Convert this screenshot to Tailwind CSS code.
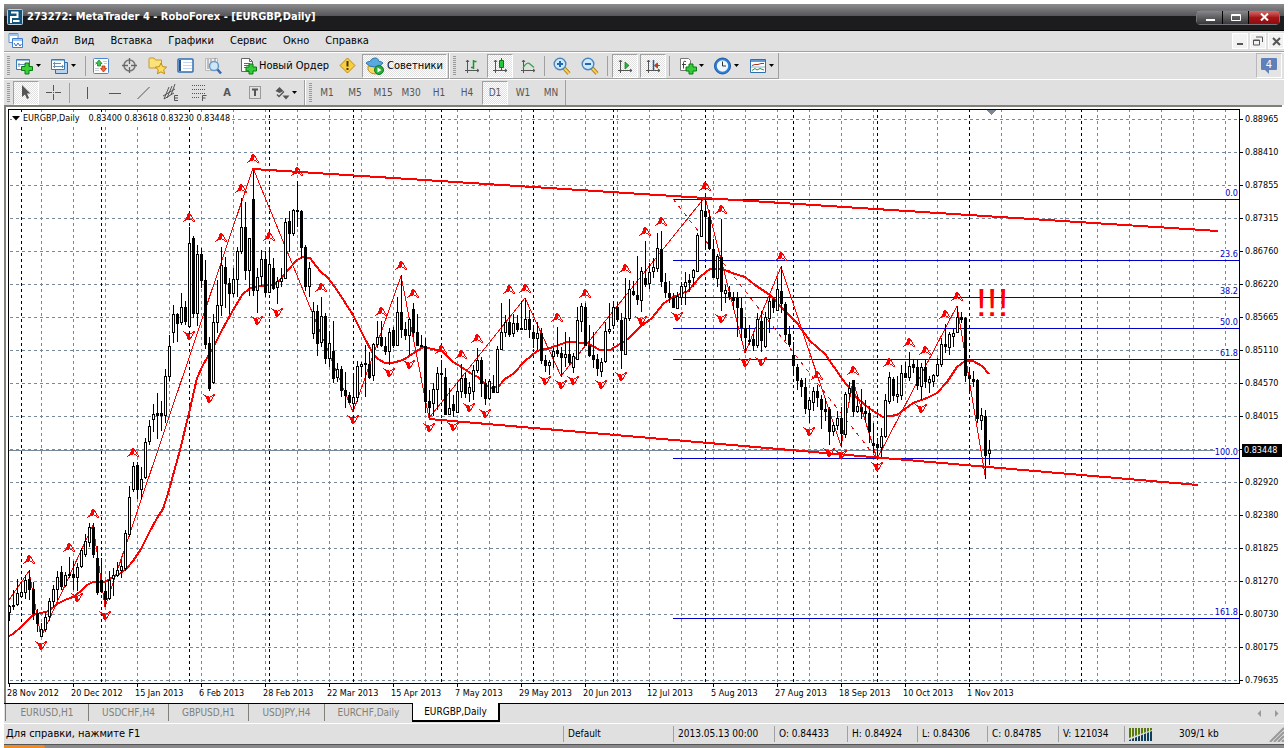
<!DOCTYPE html>
<html lang="ru">

<head>
    <meta charset="UTF-8">
    <meta name="viewport" content="width=device-width, initial-scale=1.0">
    <title>273272: MetaTrader 4 - RoboForex - [EURGBP,Daily]</title>
    <script src="https://cdn.jsdelivr.net/npm/@tailwindcss/browser@4"></script>
</head>

<body class="bg-white h-screen overflow-hidden px-1 pt-1 flex flex-col font-['DejaVu_Sans_Condensed','DejaVu_Sans',sans-serif] text-[11px] leading-4 text-black">

    <!-- title bar -->
    <header class="h-[27px] shrink-0 flex items-center pl-[3px] pr-1 bg-linear-to-b from-[#8c8c8f] from-0% via-[#57575a] via-45% to-[#1c1c1e] to-46% border-b border-black">
        <svg class="w-4 h-4" viewBox="0 0 16 16">
            <rect x="0.5" y="0.5" width="15" height="15" rx="1" fill="#12547e" stroke="#b9d3e2" />
            <path d="M4 14V8h6.500V3.500H4M6 12h6.500" fill="none" stroke="#fff" stroke-width="2" />
        </svg>
        <h1 class="pl-1 text-white font-bold text-[11px]">273272: MetaTrader 4 - RoboForex - [EURGBP,Daily]</h1>
        <div class="ml-auto flex rounded-sm border border-[#77777b] bg-black gap-px">
            <button aria-label="Minimize" class="w-[25px] h-[13px] flex items-center justify-center bg-linear-to-b from-[#88888b] to-[#38383b]"><svg width="10" height="9"><path d="M1 7h9" stroke="#fff" stroke-width="2" /></svg></button>
            <button aria-label="Maximize" class="w-[25px] h-[13px] flex items-center justify-center bg-linear-to-b from-[#88888b] to-[#38383b]"><svg width="10" height="8"><path d="M.5 1.500h9v6h-9zM1 2.500h8" fill="none" stroke="#fff" /></svg></button>
            <button aria-label="Close" class="w-[30px] h-[13px] flex items-center justify-center bg-linear-to-b from-[#d86a6a] via-[#a81418] to-[#8e0d10]"><svg width="9" height="8"><path d="M1 0.5l7 7M8 0.5l-7 7" stroke="#fff" stroke-width="2" /></svg></button>
        </div>
    </header>

    <!-- menu -->
    <nav class="h-[21px] shrink-0 flex items-center bg-[#e0e0e0] border-b border-[#a0a0a0] pl-1">
        <svg class="w-4 h-4 mr-[7px]" viewBox="0 0 16 16">
            <path d="M1 .5h9v9h-9z" fill="#fff" stroke="#5b93d8" />
            <path d="M1 1h9v2h-9z" fill="#9cc4f2" />
            <path d="M4.500 5.500h10v9h-10z" fill="#fff" stroke="#3f7ecb" />
            <path d="M5 6h9v2h-9z" fill="#9cc4f2" />
            <path d="M6 10l2 3 2-3 2 3 1.500-2" fill="none" stroke="#2f6fd0" />
        </svg>
        <div class="flex gap-4">
            <a href="#">Файл</a>
            <a href="#">Вид</a>
            <a href="#">Вставка</a>
            <a href="#">Графики</a>
            <a href="#">Сервис</a>
            <a href="#">Окно</a>
            <a href="#">Справка</a>
        </div>
        <div class="ml-auto flex gap-[2px]">
            <button aria-label="Minimize chart" class="w-4 h-4 bg-[#f2f2f2] border border-white flex items-center justify-center"><svg width="8" height="8"><path d="M1 7h6" stroke="#555" stroke-width="2" /></svg></button>
            <button aria-label="Restore chart" class="w-4 h-4 bg-[#f2f2f2] border border-white flex items-center justify-center"><svg width="10" height="10"><path d="M3 1h6.500v5M.5 4h6v5h-6zM1 4.500h6" fill="none" stroke="#555" /></svg></button>
            <button aria-label="Close chart" class="w-4 h-4 bg-[#f2f2f2] border border-white flex items-center justify-center"><svg width="9" height="9"><path d="M1 1l7 7M8 1l-7 7" stroke="#555" stroke-width="2" /></svg></button>
        </div>
    </nav>

    <!-- main toolbar -->
    <div class="h-[27px] shrink-0 flex bg-[#e0e0e0] border-t border-white">
        <div class="flex items-center h-[26px] border-b border-r border-[#a0a0a0] pl-[3px] pr-px">
            <i class="w-[3px] h-5 mr-1 bg-[repeating-linear-gradient(#999_0_1px,#e0e0e0_1px_2px)]"></i>
            <button aria-label="New chart" class="w-[35px] h-6 flex items-center pl-px">
                <svg width="19" height="18"><path d="M1.500 2.500h13v10h-13z" fill="#fff" stroke="#3a78b8" /><path d="M2 3h12v1h-12z" fill="#8dbbe8" /><path d="M4 6v4M3 7.500h7" stroke="#6a8db0" /><path d="M10 17v-3.500h-3.500v-4h3.500v-3.500h4v3.500h3.500v4h-3.500v3.500z" fill="#3ad13a" stroke="#0a7a12" /></svg>
                <svg class="ml-[2px]" width="5" height="3"><path d="M0 0h5l-2.500 3z" /></svg>
            </button>
            <button aria-label="Profiles" class="w-[36px] h-6 flex items-center pl-px">
                <svg width="19" height="18"><path d="M5.500 5.500h12v11h-12z" fill="#b6d3f0" stroke="#2f6cae" /><path d="M1.500 2.500h13v10h-13z" fill="#fff" stroke="#3a78b8" /><path d="M2 3h12v1h-12z" fill="#8dbbe8" /><path d="M4.500 5v6M3 6.500h8M12 8l1.500 1.500-1.500 1.500M3 9.500h10" fill="none" stroke="#6a8db0" /></svg>
                <svg class="ml-[2px]" width="5" height="3"><path d="M0 0h5l-2.500 3z" /></svg>
            </button>
            <i class="w-px h-5 mr-px bg-[#a0a0a0]"></i>
            <button aria-label="Market watch" class="w-7 h-6 flex items-center justify-center">
                <svg width="16" height="16"><rect x=".5" y=".5" width="15" height="15" rx="1" fill="#fff" stroke="#4b86cf" /><path d="M2 4.500h2M2 6.500h1M10 3.500h4M11 5.500h3M2 10.500h4M2 12.500h4" stroke="#c4ccd6" /><path d="M6 2l3 3.500h-1.500v2.500h-3v-2.500h-1.500z" fill="#3fc44c" stroke="#158a25" stroke-width=".8" /><path d="M10.500 14l3-3.500h-1.500v-2.500h-3v2.500h-1.500z" fill="#f06a3c" stroke="#b5330e" stroke-width=".8" /></svg>
            </button>
            <button aria-label="Data window" class="w-7 h-6 flex items-center justify-center">
                <svg width="17" height="17"><circle cx="8.500" cy="8.500" r="5.500" fill="none" stroke="#777" stroke-width="1.500" /><path d="M8.500 1v6M8.500 10v6M1 8.500h6M10 8.500h6" stroke="#666" stroke-width="1.300" /></svg>
            </button>
            <button aria-label="Navigator" class="w-7 h-6 flex items-center justify-center">
                <svg width="19" height="18"><path d="M1 2q0-1 1-1h4l1.500 2h6v8h-12.500z" fill="#fbe27a" stroke="#c79a25" /><path d="M13 6l1.700 3.700 4 .4-3 2.700.9 4-3.600-2-3.600 2 .9-4-3-2.700 4-.4z" fill="#ffdf5e" stroke="#c48a16" /></svg>
            </button>
            <button aria-label="Terminal" class="w-7 h-6 flex items-center justify-center">
                <svg width="17" height="15"><rect x="1" y="1" width="15" height="13" rx="1" fill="#fff" stroke="#2f6db4" stroke-width="1.500" /><path d="M2 2h2v11h-2z" fill="#2a4f86" /><path d="M6 4.500h9M6 7.500h9M6 10.500h9" stroke="#c3d7ee" /></svg>
            </button>
            <button aria-label="Strategy tester" class="w-7 h-6 flex items-center justify-center">
                <svg width="18" height="18"><path d="M1.500 1.500h12v12h-12z" fill="#f2f2f2" stroke="#bbb" /><path d="M4 2v10M7 2v6M11 1v5" stroke="#888" /><circle cx="10" cy="9" r="4.500" fill="#c8e6fb" fill-opacity=".85" stroke="#6b9cc5" stroke-width="1.500" /><path d="M13.500 12.500l3.500 4" stroke="#3a66b5" stroke-width="2.500" /></svg>
            </button>
            <button class="h-6 ml-2 flex items-center gap-[2px] px-1">
                <svg width="18" height="18"><path d="M2.500 1.500h8l3 3v10h-11z" fill="#fff" stroke="#666" /><path d="M10.500 1.500v3h3M5 6.500h6M5 8.500h6M5 10.500h3" fill="none" stroke="#666" /><path d="M10 17v-3h-3v-4h3v-3h4v3h3.500v4h-3.500v3z" fill="#35cc3b" stroke="#0a7a12" /></svg>
                Новый Ордер
            </button>
            <button aria-label="Editor" class="w-7 h-6 flex items-center justify-center">
                <svg width="17" height="17"><path d="M8.500 1l7.500 7.500-7.500 7.500-7.500-7.500z" fill="#f8cf3f" stroke="#b98a14" /><path d="M8.500 4v5.500M8.500 11v2" stroke="#4a3500" stroke-width="2" /></svg>
            </button>
            <button class="h-6 ml-px px-[3px] flex items-center gap-[3px] border border-[#a0a0a0] border-b-white border-r-white bg-[repeating-conic-gradient(#fff_0_25%,#e0e0e0_0_50%)] bg-[length:2px_2px]">
                <svg width="18" height="18"><path d="M2 9v4q2 4 7 4t6-4v-4z" fill="#f6d860" stroke="#b8922a" /><path d="M0 6q3 4 8.500 4t8.500-4q-1-1.500-4-1.500q-1-4-4.500-3.500t-4.500 3.500q-3 0-4 1.500z" fill="#58a9e0" stroke="#2b76ad" /><circle cx="13" cy="13" r="4.500" fill="#28ad38" stroke="#127a22" /><path d="M11.500 10.500l4 2.500-4 2.500z" fill="#fff" /></svg>
                Советники
            </button>
        </div>
        <div class="flex items-center h-[26px] border-b border-r border-l border-[#a0a0a0] border-l-white pl-[3px] pr-1">
            <i class="w-[3px] h-5 mr-[2px] bg-[repeating-linear-gradient(#999_0_1px,#e0e0e0_1px_2px)]"></i>
            <button aria-label="Bar chart" class="w-7 h-6 flex items-center justify-center">
                <svg width="16" height="16"><path d="M3.500 2v13M1 12.500h14M2 4l1.500-2 1.500 2M13 11l2 1.500-2 1.500" fill="none" stroke="#555" /><path d="M9.500 2v9M9.500 3.500h3M7 9.500h3" stroke="#129b2a" stroke-width="1.500" /></svg>
            </button>
            <button aria-label="Candlesticks" class="w-[26px] h-6 mx-px flex items-center justify-center border border-[#a0a0a0] border-b-white border-r-white bg-[repeating-conic-gradient(#fff_0_25%,#e0e0e0_0_50%)] bg-[length:2px_2px]">
                <svg width="16" height="16"><path d="M3.500 2v13M1 12.500h14M2 4l1.500-2 1.500 2M13 11l2 1.500-2 1.500" fill="none" stroke="#555" /><path d="M9.500 0v12" stroke="#0a7a12" /><path d="M7.500 2.500h4v7h-4z" fill="#28c43a" stroke="#0a7a12" /></svg>
            </button>
            <button aria-label="Line chart" class="w-7 h-6 flex items-center justify-center">
                <svg width="16" height="16"><path d="M3.500 2v13M1 12.500h14M2 4l1.500-2 1.500 2M13 11l2 1.500-2 1.500" fill="none" stroke="#555" /><path d="M3 10q4-7 7-4l4 3.500" fill="none" stroke="#35a548" stroke-width="1.300" /></svg>
            </button>
            <i class="w-px h-5 ml-[2px] mr-[3px] bg-[#a0a0a0]"></i>
            <button aria-label="Zoom in" class="w-7 h-6 flex items-center justify-center">
                <svg width="18" height="18"><path d="M11 11l5 5.500" stroke="#a87910" stroke-width="4" /><path d="M11 11l5 5.500" stroke="#f5d254" stroke-width="2" /><circle cx="7" cy="7" r="5.800" fill="#cfe9fc" stroke="#4c86bb" stroke-width="1.400" /><path d="M4 7h6M7 4v6" stroke="#2568b0" stroke-width="2" /></svg>
            </button>
            <button aria-label="Zoom out" class="w-7 h-6 flex items-center justify-center">
                <svg width="18" height="18"><path d="M11 11l5 5.500" stroke="#a87910" stroke-width="4" /><path d="M11 11l5 5.500" stroke="#f5d254" stroke-width="2" /><circle cx="7" cy="7" r="5.800" fill="#cfe9fc" stroke="#4c86bb" stroke-width="1.400" /><path d="M4 7h6" stroke="#2568b0" stroke-width="2" /></svg>
            </button>
            <i class="w-px h-5 ml-[3px] mr-1 bg-[#a0a0a0]"></i>
            <button aria-label="Auto scroll" class="w-[26px] h-6 flex items-center justify-center border border-[#a0a0a0] border-b-white border-r-white bg-[repeating-conic-gradient(#fff_0_25%,#e0e0e0_0_50%)] bg-[length:2px_2px]">
                <svg width="16" height="16"><path d="M3.500 2v13M1 12.500h14M2 4l1.500-2 1.500 2M13 11l2 1.500-2 1.500" fill="none" stroke="#555" /><path d="M8 4l4 3.500-4 3.500z" fill="#28b43a" stroke="#0a7a12" stroke-width=".7" /></svg>
            </button>
            <button aria-label="Chart shift" class="w-[26px] h-6 ml-[2px] flex items-center justify-center border border-[#a0a0a0] border-b-white border-r-white bg-[repeating-conic-gradient(#fff_0_25%,#e0e0e0_0_50%)] bg-[length:2px_2px]">
                <svg width="16" height="16"><path d="M3.500 2v13M1 12.500h14M2 4l1.500-2 1.500 2M13 11l2 1.500-2 1.500" fill="none" stroke="#555" /><path d="M8.500 2v10" stroke="#235c9c" stroke-width="1.500" /><path d="M10 7.500h5M12.500 5l-3 2.500 3 2.500z" fill="#c43a12" stroke="#c43a12" /></svg>
            </button>
            <i class="w-px h-5 ml-[3px] mr-[9px] bg-[#a0a0a0]"></i>
            <button aria-label="Indicators" class="w-[35px] h-6 flex items-center">
                <svg width="18" height="18"><path d="M1.500 1.500h8l2 2v10h-10z" fill="#fff" stroke="#777" /><path d="M7 4.500q-2.500-1-2.500 1v6M3 7.500h4" fill="none" stroke="#444" /><path d="M10 17v-3h-3v-4h3v-3h4v3h3.500v4h-3.500v3z" fill="#35cc3b" stroke="#0a7a12" /></svg>
                <svg class="ml-[2px]" width="5" height="3"><path d="M0 0h5l-2.500 3z" /></svg>
            </button>
            <button aria-label="Periods" class="w-[35px] h-6 flex items-center">
                <svg width="18" height="18"><circle cx="8.500" cy="9" r="7" fill="#eef6fd" stroke="#2f7fd6" stroke-width="2.600" /><circle cx="8.500" cy="9" r="8" fill="none" stroke="#1c4f94" stroke-width=".8" /><path d="M8.500 4.500v4.500h3.500" fill="none" stroke="#333" /></svg>
                <svg class="ml-[2px]" width="5" height="3"><path d="M0 0h5l-2.500 3z" /></svg>
            </button>
            <button aria-label="Templates" class="h-6 flex items-center">
                <svg width="18" height="16"><path d="M1.500 1.500h15v13h-15z" fill="#fff" stroke="#2f6db4" /><path d="M2 2h14v2h-14z" fill="#5e9ade" /><path d="M3 7.500l3-1h3l3-1h3" fill="none" stroke="#b0331f" /><path d="M2 9h14" stroke="#8fb0d4" /><path d="M3 12.500l3-2 2 1.500 3-1.500 4 1.500" fill="none" stroke="#23913a" /></svg>
                <svg class="ml-[2px]" width="5" height="3"><path d="M0 0h5l-2.500 3z" /></svg>
            </button>
        </div>
        <button aria-label="Messages" class="ml-auto mr-[2px] w-[26px] h-[25px] flex items-center justify-center border border-[#b8b8b8] border-r-white border-b-white bg-[#e4e4e4]">
            <svg width="16" height="16"><path d="M1 0h14q1 0 1 1v10q0 1-1 1h-7v4l-4-4h-3q-1 0-1-1v-10q0-1 1-1z" fill="#5f80b8" /><text x="8" y="10" text-anchor="middle" font-size="11" fill="#fff">4</text></svg>
        </button>
    </div>

    <!-- drawing tools and timeframes -->
    <div class="h-[26px] shrink-0 flex bg-[#e0e0e0] border-t border-white text-[#555] text-[10px]">
        <div class="flex items-center h-[25px] border-r border-[#a0a0a0] pl-[3px] pr-[4px]">
            <i class="w-[3px] h-5 mr-[3px] bg-[repeating-linear-gradient(#999_0_1px,#e0e0e0_1px_2px)]"></i>
            <button aria-label="Cursor" class="w-[26px] h-6 flex items-center justify-center border border-[#a0a0a0] border-b-white border-r-white bg-[repeating-conic-gradient(#fff_0_25%,#e0e0e0_0_50%)] bg-[length:2px_2px]">
                <svg width="10" height="15"><path d="M1 0l8.500 8.500h-3.500l2 4.500-2 1-2-4.500-3 2.500z" fill="#555" /></svg>
            </button>
            <button aria-label="Crosshair" class="w-7 h-6 flex items-center justify-center">
                <svg width="15" height="15"><path d="M7.500 0v6M7.500 9v6M0 7.500h6M9 7.500h6M7 7.500h1" stroke="#555" /></svg>
            </button>
            <i class="w-px h-5 ml-[2px] mr-[3px] bg-[#a0a0a0]"></i>
            <button aria-label="Vertical line" class="w-7 h-6 flex items-center justify-center"><svg width="15" height="14"><path d="M7.500 1v12" stroke="#555" /></svg></button>
            <button aria-label="Horizontal line" class="w-7 h-6 flex items-center justify-center"><svg width="15" height="14"><path d="M1 7.500h12" stroke="#555" /></svg></button>
            <button aria-label="Trend line" class="w-7 h-6 flex items-center justify-center"><svg width="15" height="14"><path d="M1.500 13l12-12" stroke="#555" /></svg></button>
            <button aria-label="Channel" class="w-7 h-6 flex items-center justify-center"><svg width="18" height="18"><path d="M1 12l12-7M2 15l10-6M2 15l5-12M5 14l5-12M9 11l4-11" stroke="#555" /><path d="M16 11.500h-3.500v5h3.500M13 14h3" fill="none" stroke="#555" /></svg></button>
            <button aria-label="Fibonacci" class="w-7 h-6 flex items-center justify-center"><svg width="18" height="18"><path d="M2 1.500h14M2 5.500h14M2 9.500h14M2 13.500h8" stroke="#555" stroke-dasharray="1 1" /><path d="M12.500 17v-5.500h4M12.500 14h3" fill="none" stroke="#555" /></svg></button>
            <button class="w-7 h-6 font-bold text-[11px]">A</button>
            <button aria-label="Text label" class="w-7 h-6 flex items-center justify-center"><svg width="14" height="15"><path d="M1.500 1.500h11v12h-11z" fill="none" stroke="#555" stroke-dasharray="1 1" /><path d="M4 4.500h6M7 4v7" stroke="#555" stroke-width="2" /></svg></button>
            <button aria-label="Arrows" class="w-[31px] h-6 flex items-center pl-[6px]">
                <svg width="16" height="14"><path d="M4.500 1l4 4-4 2-4-2z" fill="#555" /><path d="M2 8.500l2 2 5-5" fill="none" stroke="#555" stroke-width="1.300" /><path d="M7.500 9.500h7l-3.500 4z" fill="#555" /></svg>
                <svg class="ml-px" width="5" height="3"><path d="M0 0h5l-2.500 3z" /></svg>
            </button>
        </div>
        <div class="flex items-center h-[25px] border-l border-r border-l-white border-r-[#a0a0a0] pl-[3px]">
            <i class="w-[3px] h-5 mr-px bg-[repeating-linear-gradient(#999_0_1px,#e0e0e0_1px_2px)]"></i>
            <button class="w-7 h-6">M1</button>
            <button class="w-7 h-6">M5</button>
            <button class="w-7 h-6">M15</button>
            <button class="w-7 h-6">M30</button>
            <button class="w-7 h-6">H1</button>
            <button class="w-7 h-6">H4</button>
            <button class="w-[26px] mx-px h-6 border border-[#a0a0a0] border-b-white border-r-white bg-[repeating-conic-gradient(#fff_0_25%,#e0e0e0_0_50%)] bg-[length:2px_2px]">D1</button>
            <button class="w-7 h-6">W1</button>
            <button class="w-7 h-6">MN</button>
        </div>
    </div>

    <!-- chart window -->
    <main class="grow min-h-0 flex flex-col bg-white border-t-2 border-l-2 border-[#808078] mr-[2px] pt-[2px] pl-[2px] text-[9px] leading-3">
        <div class="grow min-h-0 flex">
            <div id="plot" class="relative grow min-w-0 border border-black overflow-hidden">
                <svg id="chart" class="block w-full h-full"></svg>
                <p class="absolute left-[3px] top-[2px] bg-white flex items-center gap-[3px] pr-px">
                    <svg width="8" height="5"><path d="M0 0h8l-4 4.500z" /></svg>
                    <span>EURGBP,Daily</span>
                    <span class="pl-[6px]">0.83400 0.83618 0.83230 0.83448</span>
                </p>
            </div>
            <div id="prices" class="relative w-[42px] shrink-0 pt-[4px]"></div>
        </div>
        <div id="dates" class="h-[19px] shrink-0 flex"></div>
    </main>

    <!-- chart tabs -->
    <div class="h-[21px] shrink-0 flex bg-[#e0e0e0] border-t border-black border-b border-b-white text-[10px] text-[#808078] pl-px">
        <button class="w-[84px] h-[17px] border-l border-r border-[#808078]">EURUSD,H1</button>
        <button class="w-20 h-[17px] border-r border-[#808078]">USDCHF,H4</button>
        <button class="w-20 h-[17px] border-r border-[#808078]">GBPUSD,H1</button>
        <button class="w-[76px] h-[17px] border-r border-[#808078]">USDJPY,H4</button>
        <button class="w-[87px] h-[17px]">EURCHF,Daily</button>
        <button class="w-[88px] h-[19px] -mt-px bg-white text-black border-2 border-t-0 border-l border-black">EURGBP,Daily</button>
        <div class="ml-auto pr-[5px] flex items-center gap-3">
            <button aria-label="Scroll left"><svg width="5" height="7"><path d="M4 0v7l-3.500-3.500z" fill="#999" /></svg></button>
            <button aria-label="Scroll right"><svg width="5" height="7"><path d="M1 0v7l3.500-3.500z" fill="#999" /></svg></button>
        </div>
    </div>

    <!-- status bar -->
    <footer class="h-5 shrink-0 flex items-center bg-[#e0e0e0] text-[10px]">
        <span class="grow pl-[2px] text-[11px]">Для справки, нажмите F1</span>
        <span class="w-[110px] pl-1 border-l border-[#a0a0a0]">Default</span>
        <span class="w-[101px] pl-1 border-l border-[#a0a0a0]">2013.05.13 00:00</span>
        <span class="w-[73px] pl-1 border-l border-[#a0a0a0]">O: 0.84433</span>
        <span class="w-[70px] pl-1 border-l border-[#a0a0a0]">H: 0.84924</span>
        <span class="w-[70px] pl-1 border-l border-[#a0a0a0]">L: 0.84306</span>
        <span class="w-[71px] pl-1 border-l border-[#a0a0a0]">C: 0.84785</span>
        <span class="w-[66px] pl-1 border-l border-[#a0a0a0]">V: 121034</span>
        <span class="w-40 h-4 pl-1 border-l border-[#a0a0a0] flex items-center">
            <svg width="24" height="13"><path d="M0 0h23v2l-23 8z" fill="#5a7a0a" /><path d="M0 12l23-9v10h-23z" fill="#0d3f5c" /><path d="M2.500 0v13M5.500 0v13M8.500 0v13M11.500 0v13M14.500 0v13M17.500 0v13M20.500 0v13" stroke="#e0e0e0" /></svg>
            <span class="pl-[26px]">309/1 kb</span>
            <svg class="ml-auto self-end" width="15" height="15"><path d="M1 15l14-14M5 15l10-10M9 15l6-6M13 15l2-2" stroke="#999" stroke-width="2" /></svg>
        </span>
    </footer>
    <div class="h-1 shrink-0 flex bg-[#8a8a8d] border-t border-[#555]">
        <i class="w-[41px] rounded-tr-sm bg-[#f08a24]"></i>
    </div>

    <script>
        // daily bars, oldest first: high, low, body top, body bottom, 1 = bearish (all in chart pixels)
        const bars = [
            [605,621,606,612,0],[590,610,605,606,1],[579,606,593,604,0],[582,597,592,596,0],[575,599,580,592,0],[570,600,579,589,1],
            [582,620,589,613,1],[609,632,613,623,1],[623,637,629,636,0],[612,632,617,629,0],[598,621,601,616,0],[585,607,589,601,0],
            [571,600,577,589,0],[566,590,572,586,1],[572,587,575,585,0],[557,578,574,575,1],[561,590,574,577,1],[563,591,567,577,0],
            [548,568,550,566,0],[534,557,541,554,0],[523,547,527,542,0],[523,558,527,554,1],[546,595,558,592,1],[558,593,580,591,1],
            [583,607,591,599,1],[571,600,580,598,0],[568,596,575,578,0],[562,577,570,575,0],[560,578,566,570,0],[530,571,533,568,0],
            [486,537,497,534,0],[462,492,466,489,0],[462,499,465,489,1],[467,499,479,489,0],[438,479,442,477,0],[420,445,426,441,0],
            [404,432,414,419,0],[393,439,413,415,1],[401,431,413,415,1],[369,423,376,415,0],[335,381,346,376,0],[305,343,314,332,0],
            [313,342,314,323,1],[293,325,307,322,0],[301,325,307,321,1],[227,327,243,326,0],[236,318,238,313,1],[245,326,254,313,0],
            [248,288,254,280,1],[260,349,280,344,1],[337,391,343,388,1],[314,384,322,382,0],[280,333,305,322,0],[247,316,265,305,0],
            [257,308,267,283,1],[278,314,283,293,1],[268,297,279,293,0],[247,297,251,279,0],[198,254,227,251,0],[202,280,227,270,1],
            [238,296,238,270,0],[168,296,199,290,1],[268,313,277,290,0],[250,286,259,276,0],[251,297,259,292,1],[247,292,264,292,0],
            [258,290,268,288,1],[277,304,281,287,0],[268,287,278,281,0],[218,278,222,278,0],[211,252,221,233,1],[209,236,210,233,0],
            [181,227,210,211,1],[210,259,211,247,1],[245,291,247,286,1],[262,297,268,286,0],[302,339,311,333,0],[305,356,311,343,1],
            [297,347,316,342,0],[313,364,316,358,1],[331,367,343,358,0],[321,383,351,378,1],[363,382,369,377,0],[366,397,369,390,1],
            [372,408,390,395,1],[392,403,395,402,1],[373,412,397,403,0],[361,402,366,397,0],[362,377,364,366,0],[345,397,363,364,1],
            [352,379,364,377,1],[343,381,344,375,0],[321,348,337,344,0],[321,347,337,345,1],[337,355,346,351,1],[328,365,332,351,0],
            [327,348,330,345,1],[297,345,312,345,0],[275,338,312,329,1],[322,340,329,335,1],[318,355,319,335,0],[303,337,309,332,1],
            [314,346,332,345,1],[335,347,345,346,1],[338,413,346,401,1],[390,419,401,407,1],[383,416,389,403,0],[367,410,373,389,0],
            [360,400,373,374,1],[368,415,377,414,1],[388,415,408,414,0],[395,417,404,410,1],[382,413,391,412,0],[364,398,378,391,0],
            [373,398,378,393,1],[382,402,387,393,0],[365,400,370,391,0],[348,373,360,370,0],[357,397,360,383,1],[379,405,383,398,1],
            [379,400,381,398,0],[375,393,386,392,1],[346,393,349,392,0],[303,350,332,349,0],[315,337,322,332,0],[299,337,322,334,1],
            [314,337,323,333,0],[315,332,323,329,1],[301,330,328,329,1],[298,330,319,329,0],[310,338,319,329,1],[326,348,332,338,1],
            [322,350,333,338,0],[328,364,333,360,1],[355,372,360,365,1],[360,375,362,365,0],[348,368,351,356,0],[327,357,350,353,1],
            [347,377,353,357,1],[332,367,354,357,0],[337,365,354,362,1],[353,373,356,367,0],[307,360,320,359,0],[303,332,306,321,0],
            [303,346,307,345,1],[325,357,345,355,1],[332,368,355,359,1],[354,376,359,368,1],[358,377,362,371,0],[322,363,331,361,0],
            [303,334,329,331,0],[302,329,307,325,0],[302,322,307,319,1],[313,369,320,350,1],[278,355,318,354,0],[280,321,289,318,0],
            [281,296,291,294,1],[256,305,295,299,1],[267,312,271,300,0],[241,287,278,284,1],[263,289,272,283,0],[258,278,267,271,0],
            [233,272,248,268,0],[231,287,249,281,1],[273,298,282,292,1],[281,303,293,297,1],[293,308,298,307,1],[292,308,296,308,0],
            [282,305,286,297,0],[272,305,282,286,0],[274,292,280,282,1],[269,287,270,277,0],[233,272,235,271,0],[198,237,210,236,0],
            [193,249,211,216,1],[210,250,217,248,1],[239,278,249,277,1],[254,287,256,278,0],[219,311,257,291,1],[285,303,290,293,0],
            [286,300,292,296,1],[292,310,297,300,1],[292,337,298,307,1],[298,341,308,327,1],[317,353,328,337,1],[325,345,340,341,1],
            [334,351,339,345,1],[313,348,319,345,0],[311,352,321,340,1],[312,348,317,346,0],[295,333,301,318,0],[297,313,299,307,1],
            [278,311,289,310,0],[266,313,291,303,1],[302,341,304,334,1],[326,347,334,344,1],[342,375,355,365,1],[364,390,367,380,1],
            [378,397,380,386,1],[378,414,387,408,1],[397,423,400,409,0],[387,411,391,402,0],[385,407,391,397,1],[395,429,399,409,1],
            [398,421,409,411,1],[407,445,409,431,1],[422,436,425,431,0],[411,430,418,425,0],[407,447,418,433,1],[392,438,394,434,0],
            [382,400,388,393,0],[380,417,380,411,1],[395,413,406,411,0],[389,419,407,411,1],[400,422,411,413,1],[406,443,413,431,1],
            [423,453,443,445,1],[438,460,444,447,1],[428,457,436,447,0],[394,438,400,436,0],[372,404,377,401,0],[377,401,379,395,1],
            [376,403,394,396,0],[365,400,373,395,0],[362,378,373,377,1],[352,381,366,377,0],[359,373,364,367,1],[360,390,367,385,1],
            [363,400,367,386,0],[360,388,367,381,1],[376,393,379,382,0],[374,387,375,381,0],[358,377,364,375,0],[338,367,344,364,0],
            [324,353,344,346,1],[332,355,334,347,0],[329,347,333,336,0],[306,333,317,332,0],[312,323,317,319,1],[317,382,318,375,1],
            [368,393,375,378,1],[371,387,379,381,1],[379,423,380,418,1],[408,430,415,420,0],[410,479,416,455,1],[440,465,450,453,0]
        ];

        const average = "9,636 13,634 21,627 29,619 33,615 41,613 49,611 57,604 65,600 73,597 81,591 87,585 93,582 105,582 113,577 121,573 127,568 133,561 141,549 149,533 157,518 163,509 169,490 180,450 189,413 192,400 197,378 203,365 213,348 222,330 232,312 242,295 250,288 262,286 275,284 281,279 288,270 297,260 303,257 310,258 320,271 328,278 337,290 353,315 363,335 372,352 378,359 385,363 392,363 403,360 417,351 423,347 432,349 442,351 453,362 463,368 470,373 478,377 483,382 490,388 498,387 505,379 513,374 525,361 537,351 550,348 567,342 587,343 600,350 610,350 620,344 628,339 640,327 652,318 663,304 673,297 688,291 700,277 710,269 722,269 732,273 745,277 755,285 770,295 783,309 797,323 810,341 825,354 843,380 857,398 870,409 883,417 897,415 913,403 927,398 937,393 947,382 957,367 965,361 973,361 982,366 989,374";
        const zigzag = "9,600 29,571 41,637 93,525 105,607 253,168 353,412 401,276 429,418 525,298 561,376 705,197 745,353 781,267 841,446 853,381 877,459 957,306 985,475";

        const upFractals = [[29,555],[69,543],[93,509],[133,448],[189,213],[221,233],[241,184],[253,154],[297,167],[269,232],[321,283],[381,307],[401,261],[413,289],[441,345],[461,350],[477,334],[509,285],[525,284],[557,313],[585,289],[625,264],[645,227],[661,217],[705,182],[721,205],[781,252],[817,371],[853,366],[889,358],[909,338],[925,346],[945,310],[957,292]];
        const downFractals = [[41,641],[77,593],[105,611],[189,331],[209,394],[257,316],[277,308],[353,415],[389,368],[409,360],[429,423],[453,422],[469,403],[485,409],[545,376],[561,380],[573,376],[601,380],[621,372],[641,316],[677,312],[721,314],[745,358],[761,357],[809,427],[829,448],[841,450],[877,462],[921,404]];

        const fibo = [["0.0",199],["23.6",260],["38.2",297],["50.0",328],["61.8",359],["100.0",458],["161.8",618]];
        const months = [21,101,189,269,353,441,533,613,705,793,877,969,1081];
        const prices = ["0.88965","0.88410","0.87855","0.87315","0.86760","0.86220","0.85665","0.85110","0.84570","0.84015","","0.82920","0.82380","0.81825","0.81270","0.80730","0.80175","0.79635"];
        const dates = ["28 Nov 2012","20 Dec 2012","15 Jan 2013","6 Feb 2013","28 Feb 2013","22 Mar 2013","15 Apr 2013","7 May 2013","29 May 2013","20 Jun 2013","12 Jul 2013","5 Aug 2013","27 Aug 2013","18 Sep 2013","10 Oct 2013","1 Nov 2013"];

        // origin of the plot area
        const left = 9, top0 = 110;
        let grid = "", candles = "", marks = "";

        for (let x = 41; x < 2600; x += 32) grid += `<path d="M${x + 0.5} 109v2000" stroke="#778899"/>`;
        for (let y = 119; y < 2100; y += 33) grid += `<path d="M10 ${y + 0.5}h2600" stroke="#778899"/>`;
        months.forEach(x => grid += `<path d="M${x + 0.5} 109v2000" stroke="#000"/>`);

        bars.forEach(([high, low, t, b, down], i) => {
            const x = left + i * 4;
            candles += `<path d="M${x + 0.5} ${high}V${low}" stroke="#000"/>`;
            if (down) candles += `<rect x="${x - 1}" y="${t}" width="3" height="${b - t + 1}" fill="#000"/>`;
            else candles += `<rect x="${x - 1}" y="${t}" width="3" height="${b - t + 1}" fill="#000"/><rect x="${x}" y="${t + 1}" width="1" height="${b - t - 1}" fill="#fff"/>`;
        });

        upFractals.forEach(([x, y]) => marks += `<use href="#up" x="${x}" y="${y}"/>`);
        downFractals.forEach(([x, y]) => marks += `<use href="#down" x="${x}" y="${y}"/>`);

        document.getElementById("chart").innerHTML = `
            <defs>
                <g id="up"><path d="M-1 0h2v6l-3 1-4 2 3-4z" fill="#f00"/><path d="M1 1l2 3 3 5-5-3" fill="none" stroke="#f00"/></g>
                <g id="down"><path d="M-1 9h2v-6l-3-1-4-2 3 4z" fill="#f00"/><path d="M1 8l2-3 3-5-5 3" fill="none" stroke="#f00"/></g>
            </defs>
            <g transform="translate(${-left} ${-top0})" fill="none" shape-rendering="crispEdges">
                <g stroke-dasharray="3 3">${grid}</g>
                <path d="M9 450.500h2600" stroke="#778899"/>
                ${fibo.map(f => `<path d="M673 ${f[1] + 0.5}h2000" stroke="#0000c8"/>`).join("")}
                <path d="M673 199l204 260" stroke="#f00" stroke-dasharray="4 5"/>
                <polyline points="${zigzag}" stroke="#f00"/>
                <polyline points="${average}" stroke="#f00" stroke-width="2"/>
                ${marks}
                ${candles}
                <path d="M253 169L1218 231M429 419L1198 485" stroke="#f00" stroke-width="2"/>
                <path d="M987 110h9l-4.500 5z" fill="#778899"/>
                <text x="976" y="316" font-family="Liberation Sans" font-size="39" fill="#f00">!!!</text>
            </g>`;

        fibo.forEach(([name, y]) => {
            document.getElementById("plot").insertAdjacentHTML("beforeend",
                `<span class="absolute right-px bg-white text-[#0000c8] leading-[10px]" style="top:${y - top0 - 11}px">${name}</span>`);
        });

        document.getElementById("prices").innerHTML = prices.map(p =>
            `<div class="h-[33px] flex items-start"><i class="w-[3px] h-px mt-[6px] bg-black"></i><span class="pl-[2px]">${p}</span></div>`).join("") +
            `<b class="absolute left-[2px] top-[335px] w-10 h-[13px] pl-[2px] bg-black text-white font-normal">0.83448</b>`;

        document.getElementById("dates").innerHTML = dates.map(d =>
            `<div class="w-16 shrink-0 whitespace-nowrap"><i class="block w-px h-[3px] ml-px bg-black"></i><span class="block -ml-px">${d}</span></div>`).join("");
    </script>
</body>

</html>
